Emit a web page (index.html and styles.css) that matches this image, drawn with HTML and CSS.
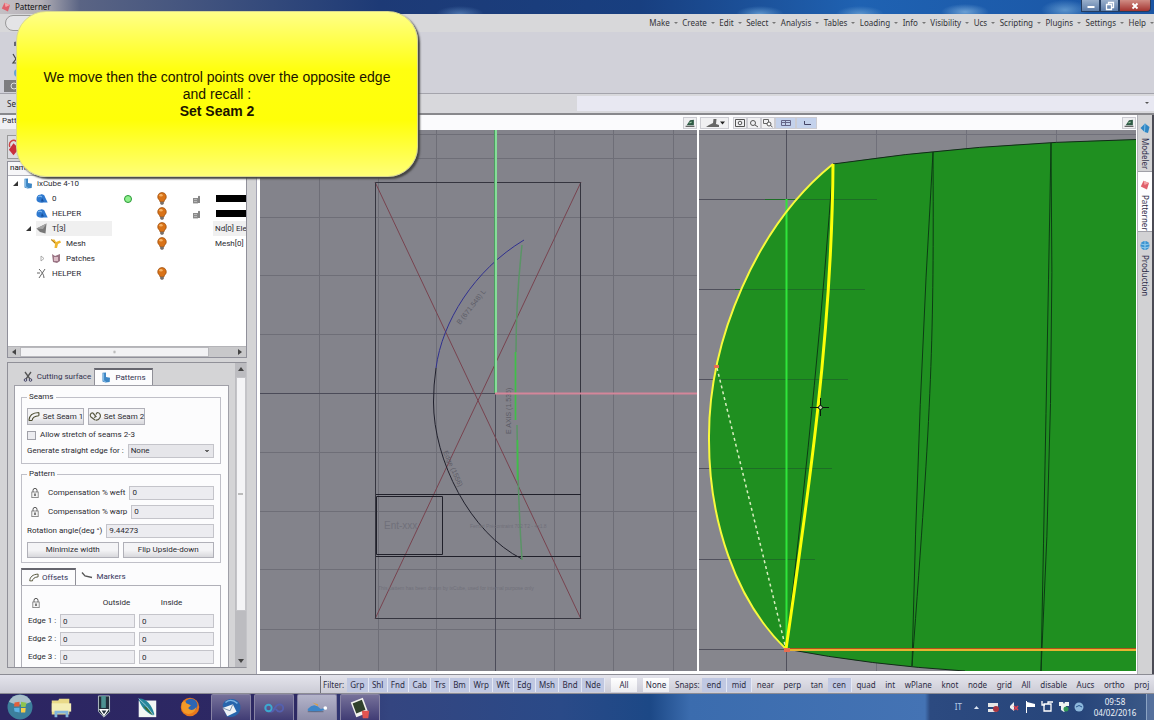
FILE: index.html
```html
<!DOCTYPE html>
<html lang="en">
<head>
<meta charset="utf-8">
<title>Patterner</title>
<link rel="stylesheet" href="styles.css">
</head>
<body>
<svg class="defs" aria-hidden="true">
  <symbol id="bulb" viewBox="0 0 10 13"><path d="M5 .5a4.3 4.3 0 0 0-2.6 7.7L3.2 10h3.6l.8-1.8A4.3 4.3 0 0 0 5 .5z" fill="#d97318" stroke="#9a4a0c" stroke-width=".7"/><ellipse cx="4" cy="3.2" rx="1.7" ry="1.3" fill="#f6b266"/><path d="M3.2 9.8h3.6v2l-1 .9H4.2l-1-.9z" fill="#77706c"/></symbol>
  <symbol id="lock" viewBox="0 0 10 12"><path d="M3 5V3.4a2 2 0 0 1 4 0V5" fill="none" stroke="#555" stroke-width="1"/><rect x="1.8" y="5" width="6.4" height="5.6" fill="#f4f4f4" stroke="#777" stroke-width=".8"/><path d="M5 6.5v2.6" stroke="#333" stroke-width="1.2"/></symbol>
  <symbol id="unlock" viewBox="0 0 9 10"><path d="M1 4h5v5.4H1z" fill="#8a8a8a"/><path d="M2 5.5h3M2 7.5h3" stroke="#ccc" stroke-width=".7"/><path d="M6.2 9V2.2a1 1 0 0 1 1.6 0V9z" fill="#666"/></symbol>
  <symbol id="layer" viewBox="0 0 12 10"><path d="M.5 6.500C.3 3 2 1 4.300 1.300 6 .2 8.600 1.300 9 3.500L11.700 9H7.500C4 9.500 1.200 9 .5 6.500z" fill="#2f79cf"/><path d="M2 3.600c1-1.300 3-1.200 4 0" stroke="#8ec4f4" fill="none"/><path d="M5 8 6 4.500l2 3.500z" fill="#174f9c"/></symbol>
  <symbol id="pattern" viewBox="0 0 10 11"><path d="M1.500.8 5 .5v4.600l4 .6-.3 4.300-4.200.6-3-1z" fill="#3d86c4"/><path d="M2.600 1.300v7.500l2 .8" stroke="#8cc2ec" fill="none"/></symbol>
  <symbol id="gem" viewBox="0 0 10 11"><path d="M3.500.8 9 3 7 9.500.8 6.500z" fill="#e0606c"/><path d="M3.500.8 9 3 4.600 5z" fill="#f4a4a8"/></symbol>
  <symbol id="pin" viewBox="0 0 10 9"><path d="M1 7.500h8" stroke="#555"/><path d="m2 6.500 3-4.500 3.500-.5v5z" fill="#2f5a45"/><path d="m4.500 4.500 2-1" stroke="#9ac6a4"/></symbol>
  <symbol id="offset" viewBox="0 0 11 9"><path d="M.8 8.200C1 4 4 1 10 .8M3.800 8.200C4 6 6 4 10 3.800M.8 8.200h3M10 .8v3" fill="none" stroke="#4c4c30" stroke-width="1"/></symbol>
</svg>

<header class="titlebar">
  <span class="app-name"><svg class="ic10"><use href="#gem"/></svg>Patterner</span>
  <div class="window-buttons">
    <button class="win" aria-label="Minimize"><svg viewBox="0 0 12 10"><path d="M2.500 6h7" stroke="#fff" stroke-width="2"/></svg></button>
    <button class="win" aria-label="Restore"><svg viewBox="0 0 12 10"><path d="M4.500 3V1.500h5v5H8M2.500 3.500h5v5h-5z" fill="none" stroke="#fff" stroke-width="1.300"/></svg></button>
    <button class="win close" aria-label="Close"><svg viewBox="0 0 12 10"><path d="m3.500 2.500 5 5m0-5-5 5" stroke="#fff" stroke-width="1.800"/></svg></button>
  </div>
</header>

<nav class="menubar">
  <span class="quick"></span>
  <div class="menus">
    <button>Make</button><button>Create</button><button>Edit</button><button>Select</button><button>Analysis</button><button>Tables</button><button>Loading</button><button>Info</button><button>Visibility</button><button>Ucs</button><button>Scripting</button><button>Plugins</button><button>Settings</button><button>Help</button>
  </div>
</nav>

<section class="ribbon">
  <svg class="ribbon-tools" viewBox="0 0 60 60"><path d="m10 10 4-1v5h-4z" fill="#667"/><path d="m9 22 3 5-3 4h6" fill="none" stroke="#444" stroke-width="1.200"/><circle cx="14" cy="41" r="4" fill="#6aa2d4"/><path d="M0 48h60v12H0z" fill="#7d7d80"/><circle cx="10" cy="54" r="3" fill="none" stroke="#ddd"/></svg>
</section>

<section class="command">
  <label class="command-label" for="cmd">Select</label>
  <input class="command-input" id="cmd"><span class="caret"></span>
</section>

<main class="workspace">
  <aside class="side">
    <div class="side-title">Patterner</div>
    <div class="side-body">
      <div class="side-tools"><svg viewBox="0 0 24 24"><path d="M2 12C0 6 6 3 9 6" fill="none" stroke="#c44" stroke-width="1.500"/><path d="m6 8 6 6-6 7-5-6z" fill="#c8303c"/></svg></div>
      <section class="tree">
        <div class="tree-head">name</div>
        <ul class="tree-rows">
          <li><span class="name l0"><i class="tw expanded"></i><svg class="ic10"><use href="#pattern"/></svg>ixCube 4-10</span></li>
          <li><span class="name l1"><svg class="ic12"><use href="#layer"/></svg>0</span><span class="dot"></span><svg class="bulb"><use href="#bulb"/></svg><svg class="lk"><use href="#unlock"/></svg><span class="swatch"></span></li>
          <li><span class="name l1"><svg class="ic12"><use href="#layer"/></svg>HELPER</span><svg class="bulb"><use href="#bulb"/></svg><svg class="lk"><use href="#unlock"/></svg><span class="swatch"></span></li>
          <li><span class="name l1 sel"><i class="tw expanded"></i><svg class="ic12" viewBox="0 0 12 11"><path d="M.5 5.500 10.500.5 9.500 10.500 4 9z" fill="#777"/><path d="M.5 5.500 10.500.5 7 6z" fill="#a5a5a5"/></svg>T[3]</span><svg class="bulb"><use href="#bulb"/></svg><span class="info sel">Nd[0] Ele</span></li>
          <li><span class="name l2"><svg class="ic12" viewBox="0 0 12 11"><path d="M1 1.500h3.500L6 4l4-1.500 1 2L8 6l-1 4H4.500L5 6z" fill="#eeb630"/><path d="m1 1.500 4 3.500" stroke="#a87418"/></svg>Mesh</span><svg class="bulb"><use href="#bulb"/></svg><span class="info">Mesh[0]</span></li>
          <li><span class="name l2"><svg class="tw" viewBox="0 0 5 7"><path d="M1 1v5l3-2.500z" fill="#fff" stroke="#999" stroke-width=".8"/></svg><svg class="ic12" viewBox="0 0 12 11"><path d="m2 1 3 2 5-2v7L7 10 3 9z" fill="#9a7484"/><path d="M4 4h4v4H4z" fill="#dcbcc6"/></svg>Patches</span></li>
          <li><span class="name l1"><svg class="ic12" viewBox="0 0 12 11"><path d="M3 1c3 3 5 6 5 9M9 1 3 10M1 5h3" fill="none" stroke="#666"/></svg>HELPER</span><svg class="bulb"><use href="#bulb"/></svg></li>
        </ul>
        <div class="hscroll"><i class="arr left"></i><div class="hthumb"></div><i class="arr right"></i></div>
      </section>

      <section class="options">
        <div class="options-view">
          <div class="tabs">
            <button class="tab"><svg class="ic10" viewBox="0 0 10 11"><path d="m2 1 5 7M8 1 3 8" stroke="#555" stroke-width="1.300"/><circle cx="2.500" cy="9" r="1.300" fill="none" stroke="#446"/><circle cx="7.500" cy="9" r="1.300" fill="none" stroke="#446"/></svg>Cutting surface</button>
            <button class="tab active"><svg class="ic10"><use href="#pattern"/></svg>Patterns</button>
          </div>
          <div class="pane">
            <fieldset class="seams"><legend>Seams</legend>
              <div class="seam-buttons">
                <button class="btn"><svg class="ic12"><use href="#offset"/></svg>Set Seam 1</button>
                <button class="btn"><svg class="ic12" viewBox="0 0 12 10"><path d="M4 1.500C1.500 1 .5 4 2 5.500l4 3M4 1.500 7 5 5 6M8 1c3 0 4 3 3 5S8 9 6.500 8.500M8 1l-1 2" fill="none" stroke="#5c5c44" stroke-width="1.200"/></svg>Set Seam 2</button>
              </div>
              <label class="check"><input type="checkbox">Allow stretch of seams 2-3</label>
              <div class="field"><label for="straight">Generate straight edge for :</label><select id="straight"><option>None</option></select></div>
            </fieldset>
            <fieldset class="pattern"><legend>Pattern</legend>
              <div class="field"><svg class="padlock"><use href="#lock"/></svg><label for="weft">Compensation % weft</label><input id="weft" value="0"></div>
              <div class="field"><svg class="padlock"><use href="#lock"/></svg><label for="warp">Compensation % warp</label><input id="warp" value="0"></div>
              <div class="field"><label for="rot">Rotation angle(deg °)</label><input id="rot" value="9.44273"></div>
              <div class="pair"><button class="btn">Minimize width</button><button class="btn">Flip Upside-down</button></div>
            </fieldset>
            <div class="subtabs">
              <button class="subtab active"><svg class="ic10"><use href="#offset"/></svg>Offsets</button>
              <button class="subtab"><svg class="ic12" viewBox="0 0 12 10"><path d="m1 1 3 3.500L11 6" fill="none" stroke="#555" stroke-width="1.300"/></svg>Markers</button>
            </div>
            <div class="offsets">
              <svg class="padlock"><use href="#lock"/></svg><span class="col outside">Outside</span><span class="col inside">Inside</span>
              <label for="o1">Edge 1 :</label><input id="o1" value="0"><input aria-label="Edge 1 inside" value="0">
              <label for="o2">Edge 2 :</label><input id="o2" value="0"><input aria-label="Edge 2 inside" value="0">
              <label for="o3">Edge 3 :</label><input id="o3" value="0"><input aria-label="Edge 3 inside" value="0">
            </div>
          </div>
        </div>
        <div class="vscroll"><i class="arr up"></i><div class="vthumb"></div><i class="arr down"></i></div>
      </section>
    </div>
  </aside>

  <section class="views">
    <div class="view">
      <div class="view-bar"><button class="tool end" aria-label="Pin view"><svg class="ic10"><use href="#pin"/></svg></button></div>
      <svg class="scene" viewBox="260 130 437 541" preserveAspectRatio="xMinYMin slice">
        <rect x="0" y="0" width="1600" height="1400" fill="#83838b"/>
        <path d="M319.500 130v541M378.500 130v541M436.500 130v541M554.500 130v541M613.500 130v541M673.500 130v541M260 134.500h437M260 158.500h437M260 217.500h437M260 275.500h437M260 334.500h437M260 452.500h437M260 511.500h437M260 569.500h437M260 629.500h437" stroke="#6e6e77" fill="none"/>
        <path d="M260 393.500h236M495.500 393v278" stroke="#4b4b58"/>
        <path d="m375 182 206 437M581 182 375 619" stroke="#78434f" fill="none"/>
        <g fill="none" stroke="#35353f" stroke-width="1"><path d="M375.500 182.500h205v436h-205z"/><path d="M376 494.500h205M376 556.500h205M376.500 496.500h66v58h-66z" stroke="#20202a"/></g>
        <path d="M433.500 402C433.500 460 470 533 522 559" fill="none" stroke="#20202c"/>
        <path d="M524 240C474 270 442 322 436 368" fill="none" stroke="#30308f"/>
        <path d="M436 368Q433.500 385 433.500 402" fill="none" stroke="#20202c"/>
        <path d="M522 245Q516 300 516 352M517 425Q518 500 522 560" fill="none" stroke="#5a9466" stroke-width="1.500"/>
        <path d="M515.500 352v68M517.500 440v40" stroke="#3fc048" stroke-width="1.700"/>
        <g class="scene-text"><text transform="translate(460 325) rotate(-52)">B (671.548) L</text><text transform="translate(511 434) rotate(-90)">E AXIS (1.536)</text><text transform="translate(443 452) rotate(66)">Edge (1556)</text></g>
        <g class="scene-text faint"><text x="384" y="529" font-size="10">Ent-xxx</text><text x="470" y="528">Ferrari Précontraint 702 T2 - 4x1.8</text><text x="378" y="590">This pattern has been drawn by ixCube, used for internal purpose only</text></g>
        <path d="M495.500 130v263" stroke="#86dd98" stroke-width="3"/><path d="M494.500 130v263" stroke="#4e9b62"/>
        <path d="M495 393.500h202" stroke="#d4869a" stroke-width="2"/>
      </svg>
    </div>
    <div class="view">
      <div class="view-bar">
        <button class="tool cam" aria-label="Camera"><svg viewBox="0 0 22 10"><path d="M2 9h13V7l-3-1 .5-5h-3L9 5 5 7z" fill="#666"/><path d="M16 3.500h5L18.500 6.500z" fill="#222"/></svg></button>
        <button class="tool gap" aria-label="Zoom all"><svg viewBox="0 0 12 10"><path d="M1.500 1.500h9v7h-9z" fill="none" stroke="#555"/><circle cx="6" cy="5" r="1.800" fill="none" stroke="#555"/></svg></button>
        <button class="tool" aria-label="Zoom"><svg viewBox="0 0 12 10"><circle cx="5" cy="5" r="2.500" fill="none" stroke="#555"/><path d="m7 7 3 2" stroke="#555"/></svg></button>
        <button class="tool" aria-label="Zoom window"><svg viewBox="0 0 12 10"><path d="M1.500 1.500h5v4h-5z" fill="none" stroke="#666"/><circle cx="7" cy="6" r="2" fill="#fff" stroke="#555"/><path d="m8.500 7.500 2 1.500" stroke="#555"/></svg></button>
        <button class="tool on" aria-label="Grid"><svg viewBox="0 0 12 10"><path d="M1.500 2.500h9v5h-9zM1.500 4.500h9M5.500 2.500v5" fill="none" stroke="#668"/></svg></button>
        <button class="tool on" aria-label="Axes"><svg viewBox="0 0 12 10"><path d="M3.500 3v3.500H10" fill="none" stroke="#446"/></svg></button>
        <button class="tool end" aria-label="Pin view"><svg class="ic10"><use href="#pin"/></svg></button>
      </div>
      <svg class="scene" viewBox="699 130 437 541" preserveAspectRatio="xMinYMin slice">
        <rect x="600" y="0" width="1600" height="1400" fill="#86868d"/>
        <path d="M876.500 130v541M966.500 130v541M1056.500 130v541M699 134.500h437" stroke="#70707a"/>
        <path d="M786.500 130v541M699 199.500h90M699 289.500h60M699 379.500h20M699 468.500h20M699 559.500h40M699 649.500h90" stroke="#50505c"/>
        <path d="M833 164Q975 143 1136 139.500V671H965Q870 665 786 649C735 600 709 520 709 440C708 340 757 225 833 164z" fill="#1f8f20"/>
        <path d="M765 199.500h112M735 289.500h130M718 379.500h130M712 468.500h120M730 559.500h85" stroke="#1d6e26"/>
        <g fill="none" stroke="#0c3c14"><path d="M833 164Q975 143 1136 139.500M786 649Q870 665 965 671" stroke="#13291a"/>
        <path d="M833 164Q819 365 786 649M933 152C934 340 932 400 912 666M933 152Q918 400 912 666M1051 143Q1055 400 1041 671M1051 143Q1046 420 1041 671"/></g>
        <path d="M786.500 199v450" stroke="#2fe53b" stroke-width="2"/>
        <path d="M786 649.500h350" stroke="#b0521c" stroke-width="3"/><path d="M786 650h350" stroke="#e8b330" stroke-width="2"/>
        <path d="m717 368 69 281" stroke="#d8efc0" stroke-width="1.500" stroke-dasharray="3 3"/>
        <path d="M786 649C735 600 709 520 709 440C708 340 757 225 833 164" fill="none" stroke="#f8fa3c" stroke-width="2"/>
        <path d="M833 164C832 330 809 490 786 649" fill="none" stroke="#fbff08" stroke-width="3"/>
        <path d="M714 365h5v3h-5zM784 648h6v4h-6z" fill="#e86c50"/>
        <path d="M810 407.500h19M820.500 398v18" stroke="#081c0c"/><circle cx="820.500" cy="407.500" r="2" fill="#bcd0a8" stroke="#081c0c"/>
      </svg>
    </div>
  </section>

  <nav class="modes">
    <button class="mode"><svg class="ic10" viewBox="0 0 10 11"><path d="M5 .5 9.500 4 8 10 4.500 9 .5 5z" fill="#2f86c4"/><path d="m5 .5-.5 8.500" stroke="#7cc0ea"/></svg>Modeler</button>
    <button class="mode active"><svg class="ic10"><use href="#gem"/></svg>Patterner</button>
    <button class="mode"><svg class="ic10" viewBox="0 0 10 11"><circle cx="5" cy="5.500" r="4.500" fill="#3b93d0"/><path d="M1 4q4 2 8 0M1 7q4 2 8 0M5 1v9" stroke="#a4d8f4" fill="none" stroke-width=".8"/></svg>Production</button>
  </nav>
</main>

<footer class="status">
  <div class="filters"><span class="cap">Filter:</span>
    <div class="toggles lit"><button>Grp</button><button>Shl</button><button>Fnd</button><button>Cab</button><button>Trs</button><button>Bm</button><button>Wrp</button><button>Wft</button><button>Edg</button><button>Msh</button><button>Bnd</button><button>Nde</button></div>
    <button class="plain">All</button><button class="plain">None</button>
  </div>
  <span class="cap">Snaps:</span>
  <div class="snaps"><button class="on">end</button><button class="on">mid</button><button>near</button><button>perp</button><button>tan</button><button class="on">cen</button><button>quad</button><button>int</button><button>wPlane</button><button>knot</button><button>node</button><button>grid</button><button>All</button><button>disable</button><button>Aucs</button><button>ortho</button><button>proj</button></div>
</footer>

<footer class="taskbar">
  <button class="task" aria-label="Start"><svg viewBox="0 0 26 26"><circle cx="13" cy="13" r="12.500" fill="#3c7f9c"/><path d="M2 8a12 12 0 0 1 22 0Q13 13 2 8z" fill="#a9bfca"/><path d="m7.500 8.500 5-.8v4.800H7z" fill="#e2603c"/><path d="m14 7.800 5.500 1-1 4.200H14z" fill="#8ec450"/><path d="m7 14 5.500-.2v4.800l-5-1z" fill="#5cb2e4"/><path d="M14 14h4.700l-.5 4.500-4.200 0z" fill="#f6cc48"/></svg></button>
  <button class="task" aria-label="Explorer"><svg viewBox="0 0 26 26"><path d="M3 6h7l1-2h11v17H3z" fill="#e9d988"/><path d="M3 9h21v9H3z" fill="#f4edb4"/><path d="M6 24v-7h15v7h-3v-4H9v4z" fill="#80b4dc"/></svg></button>
  <button class="task" aria-label="Pen tool"><svg viewBox="0 0 26 26"><path d="M7 1h12v17l-6 6-6-6z" fill="#24303c" stroke="#b8c4ca"/><path d="M10 1h5v13h-5z" fill="#4e9292"/><path d="m9 16 4 6 4-6z" fill="none" stroke="#fff" stroke-width="1.500"/></svg></button>
  <button class="task" aria-label="Editor"><svg viewBox="0 0 26 26"><path d="M4 6h19v18H4z" fill="#f2f6f4"/><path d="M4 4c7-1 14 6 17 17l-2 1C11 18 6 12 4 4z" fill="#26869c"/><path d="M9 12q7 3 11 10-6-3-11-10z" fill="#3c6a28"/><path d="M4 4q9 7 16 18" stroke="#9cc8d8" fill="none"/></svg></button>
  <button class="task" aria-label="Firefox"><svg viewBox="0 0 26 26"><circle cx="13" cy="13" r="10" fill="#e8771c"/><circle cx="14" cy="11" r="7" fill="#2c66b4"/><path d="M4 9c2-3 4-3 5 0l5 2-3 3c2 3 6 3 9-1-1 8-13 11-16 2z" fill="#f49a28"/></svg></button>
  <button class="task open" aria-label="Mail"><svg viewBox="0 0 26 26"><path d="M4 10C5 2 20 0 23 10c2 9-7 15-15 12z" fill="#2765ac"/><path d="M7 7q6-5 13 1" stroke="#7cb4e4" fill="none" stroke-width="1.500"/><path d="M4 13 15 9l4 8-10 5z" fill="#eef2f6"/><path d="m4 13 8 3 3-7" fill="none" stroke="#7890ac"/></svg></button>
  <button class="task open" aria-label="Links"><svg viewBox="0 0 26 26"><path d="M9 9a4 3.500 0 1 0 0 8q3 0 5-4t5-4a3.500 3.500 0 1 1 0 8q-2 0-4-3" fill="none" stroke="#5460b0" stroke-width="2"/><circle cx="7" cy="13" r="3.500" fill="none" stroke="#3caad0" stroke-width="2"/></svg></button>
  <button class="task open current" aria-label="ixCube"><svg viewBox="0 0 26 26"><path d="M3 14q7-8 14 0l5-1v2q-9 4-19 1z" fill="#3e86c8"/><path d="m8 7 6 2v2z" fill="#d8a048"/><path d="M3 17h17" stroke="#606478"/><circle cx="22" cy="13" r="2" fill="#fff"/></svg></button>
  <button class="task open" aria-label="Pictures"><svg viewBox="0 0 26 26"><path d="m3 7 13-5 6 16-13 5z" fill="#f2f2ee"/><path d="m5 8 10-4 4 11-10 4z" fill="#30412c"/><path d="M15 16h8l-1 8h-6z" fill="#e25450"/></svg></button>
  <div class="tray">
    <span class="lang">IT</span>
    <svg class="tray-icons" viewBox="0 0 110 16"><path d="m0 10 2.500-3L5 10z" fill="#dde6f4"/><path d="M14 4h10v4H14zM14 10h9v3h-9z" fill="#e6e6e6"/><circle cx="22" cy="10" r="3" fill="#a83440"/><path d="m36 7 4-4v9l-4-3z" fill="#eee"/><path d="m40 7 4 4m0-4-4 4" stroke="#e0404c" stroke-width="1.600"/><path d="M52.500 2v12" stroke="#fff"/><path d="m53 3 8 2v3l-8 0z" fill="#fff"/><path d="M70 5h7v7h-7zM68 2v4h3M74 5V3h5" fill="none" stroke="#fff" stroke-width="1.300"/><path d="M85 3h4l1 2 1-2h4v4h-3v4l-2 2-3-2V7h-2z" fill="#eef4f0"/><circle cx="92" cy="10" r="2.500" fill="#2f9656"/><circle cx="105" cy="8" r="4.500" fill="#8cb8dc"/><path d="M102 8q3-3 6 0" stroke="#27558c" fill="none"/></svg>
    <div class="clock"><span>09:58</span><span>04/02/2016</span></div>
    <button class="desktop" aria-label="Show desktop"></button>
  </div>
</footer>

<div class="callout"><p>We move then the control points over the opposite edge<br>and recall :<br><strong>Set Seam 2</strong></p></div>
</body>
</html>
```
FILE: styles.css
```css
* { box-sizing: border-box; }
html, body { height: 100%; }
body {
  margin: 0;
  display: flex;
  flex-direction: column;
  overflow: hidden;
  position: relative;
  background: #d6d6d8;
  color: #2a2a30;
  font: 8px/12px "Noto Sans", "Open Sans", sans-serif;
}
button, input, select { font: inherit; color: inherit; margin: 0; padding: 0; border: 0; background: none; border-radius: 0; min-width: 0; }
button { white-space: nowrap; }
svg { flex: none; }
.defs { display: none; }
.ic10 { width: 10px; height: 11px; }
.ic12 { width: 12px; height: 11px; }

.titlebar {
  flex: none; height: 14px; display: flex; justify-content: space-between;
  background:
    radial-gradient(ellipse 24px 8px at 460px 14px, #4c74ac, transparent),
    radial-gradient(ellipse 24px 8px at 760px 14px, #5c94cc, transparent),
    radial-gradient(ellipse 24px 8px at 860px 14px, #5c94cc, transparent),
    radial-gradient(ellipse 24px 8px at 965px 12px, #6ca0d4, transparent),
    radial-gradient(ellipse 24px 10px at 1065px 10px, #5c94cc, transparent),
    linear-gradient(90deg, #c4c0c4 0, #b4b0b6 40px, #5a6484 80px, #1d3a76 380px, #183f80 640px, #1f62b2 860px, #1a55a4 1154px);
}
.app-name { display: flex; align-items: center; gap: 4px; padding-left: 1px; color: #111; }
.window-buttons { display: flex; height: 12px; margin-right: 3px; }
.win { width: 19px; display: flex; justify-content: center; align-items: center; border: 1px solid #233c60; border-top: 0; background: linear-gradient(#9ab0cc, #5c7ca8); }
.win svg { width: 12px; height: 10px; }
.close { width: 32px; border-radius: 0 0 4px 0; background: linear-gradient(#d08c84, #a43430); }

.menubar { flex: none; height: 18px; display: flex; justify-content: flex-end; align-items: center; background: #d8d8da; }
.quick { width: 60px; height: 16px; margin-right: auto; margin-left: 5px; border: 1px solid #999; border-radius: 8px; background: #e4e4e6; }
.menus { width: 44%; padding-left: 3px; display: flex; justify-content: space-between; color: #333338; }
.menus button { display: flex; align-items: center; gap: 4px; }
.menus button::after { content: ""; border: 2px solid transparent; border-top-color: #777; border-bottom: 0; }

.ribbon { flex: none; height: 62px; background: #d1d1d9; border-bottom: 1px solid #a4a4ac; padding-left: 4px; }
.ribbon-tools { width: 60px; height: 60px; display: block; }
.command { flex: none; height: 21px; display: flex; align-items: center; background: #d8d8dc; border-bottom: 2px solid #88888c; position: relative; }
.command-label { flex: 1; padding-left: 7px; }
.command-input { width: 50%; height: 15px; padding: 0 4px; background: #e8e8f2; }
.caret { position: absolute; right: 5px; top: 8px; border: 2px solid transparent; border-top-color: #555; border-bottom: 0; }

.workspace { flex: 1; min-height: 0; display: flex; }
.side { flex: none; width: 257px; display: flex; flex-direction: column; background: #d4d4d6; border-right: 1px solid #a4a4b4; font-family: Roboto, sans-serif; }
.side-title { height: 14px; padding-left: 2px; background: #f0f0f4; }
.side-body { flex: 1; min-height: 0; display: flex; flex-direction: column; padding: 6px 9px 6px 7px; }
.side-tools { height: 24px; margin-bottom: 2px; }
.side-tools svg { width: 24px; height: 24px; border: 1px solid #999; background: #dcdce0; }
.tree { flex: none; height: 197px; display: flex; flex-direction: column; background: #fff; border: 1px solid #90909a; margin-bottom: 4px; }
.tree-head { height: 14px; padding-left: 2px; background: #f6f6f8; border-bottom: 1px solid #b4b4bc; color: #111; }
.tree-rows { flex: 1; list-style: none; margin: 0; padding: 0; overflow: hidden; }
.tree-rows li { height: 15px; display: grid; grid-template-columns: 104px 32px 36px 33px 1fr; align-items: center; }
.name { grid-column: 1; grid-row: 1; display: flex; align-items: center; gap: 4px; height: 15px; position: relative; white-space: nowrap; }
.l0 { padding-left: 15px; }
.l1 { padding-left: 28px; }
.l2 { padding-left: 42px; }
.name.sel { background: linear-gradient(#f0f0f0, #f0f0f0) right / 76px 100% no-repeat; }
.tw { position: absolute; margin-left: -10px; width: 5px; height: 7px; }
.tw.expanded { width: 0; height: 0; border-left: 5px solid transparent; border-bottom: 5px solid #333; }
.dot { grid-column: 2; grid-row: 1; justify-self: center; width: 8px; height: 8px; border-radius: 50%; border: 1px solid #2a9838; background: #8ef08c; }
.bulb { grid-column: 3; grid-row: 1; justify-self: center; width: 10px; height: 13px; }
.lk { grid-column: 4; grid-row: 1; justify-self: center; width: 9px; height: 10px; }
.swatch { grid-column: 5; grid-row: 1; height: 7px; margin-left: 3px; background: #000; }
.info { grid-column: 5; grid-row: 1; height: 15px; line-height: 15px; padding-left: 2px; white-space: nowrap; }
.info.sel { background: #f0f0f0; }
.hscroll { height: 11px; display: flex; align-items: center; background: #c8c8ca; border-top: 1px solid #b4b4b8; }
.hthumb { flex: 1; height: 10px; margin: 0 29px 0 4px; border: 1px solid #b8b8bc; background: radial-gradient(circle 2px, #aaa, transparent) #f2f2f4; }
.arr { width: 0; height: 0; flex: none; border: 3px solid transparent; }
.left { border-right: 4px solid #444; border-left: 0; margin-left: 4px; }
.right { border-left: 4px solid #444; border-right: 0; margin-right: 4px; }
.up { border-bottom: 4px solid #444; border-top: 0; }
.down { border-top: 4px solid #444; border-bottom: 0; }

.options { flex: 1; min-height: 0; display: flex; border: 1px solid #909098; border-right-color: #c4c4c8; overflow: hidden; }
.options-view { flex: 1; padding: 5px 6px 0; overflow: hidden; }
.tabs { display: flex; padding-left: 6px; }
.tab { height: 17px; width: 74px; display: flex; align-items: center; justify-content: center; gap: 4px; color: #333350; }
.tab.active, .subtab.active { background: #fcfcfd; border: 1px solid #909098; border-bottom: 0; border-top: 2px solid #66666e; }
.tab.active { width: 59px; }
.pane { background: #fcfcfd; border: 1px solid #a0a0a8; height: 300px; padding: 5px 7px 0 6px; }
fieldset { margin: 0; min-width: 0; border: 1px solid #c0c0c8; padding: 0 6px 0 5px; display: flow-root; }
legend { padding: 0 2px; margin-left: 0; line-height: 12px; }
.seams { height: 73px; margin-bottom: 4px; }
.pattern { height: 95px; margin-bottom: 5px; }
.seam-buttons { display: flex; gap: 4px; margin-top: 5px; }
.btn { height: 17px; border: 1px solid #b0b0b8; background: linear-gradient(#f4f4f6 50%, #d8d8dc); display: flex; align-items: center; justify-content: center; gap: 3px; }
.seam-buttons .btn { width: 57px; }
.check { display: flex; align-items: center; gap: 4px; height: 16px; margin-top: 2px; }
.check input { appearance: none; width: 9px; height: 9px; border: 1px solid #a0a0a8; background: #ececf0; }
.field { display: flex; align-items: center; gap: 4px; height: 15px; white-space: nowrap; }
.pattern .field { margin-bottom: 4px; }
.pattern .field:first-of-type { margin-top: 5px; }
.field input, .field select, .offsets input { flex: 1; height: 14px; padding: 0 2px; border: 1px solid #c4c4ca; background: #ececf0; }
.field select { appearance: none; background: conic-gradient(from -45deg at 50% 100%, #666 90deg, transparent 0) right 4px center / 4px 2px no-repeat, #e6e6ea; }
.padlock { width: 10px; height: 12px; margin: 0 4px 0 3px; }
.pair { display: grid; grid-template-columns: 1fr 1fr; gap: 4px; }
.pair .btn { height: 16px; }
.subtabs { display: flex; }
.subtab { height: 17px; width: 55px; display: flex; align-items: center; justify-content: center; gap: 3px; color: #333358; }
.offsets { border: 1px solid #b0b0b8; height: 120px; display: grid; grid-template-columns: 28px 1fr 1fr; grid-auto-rows: 14px; align-items: center; gap: 4px; padding: 10px 6px 0; }
.offsets label { white-space: nowrap; }
.offsets input { width: 100%; }
.col { text-align: center; }
.outside { padding-left: 38px; }
.inside { padding-right: 10px; }
.vscroll { width: 11px; display: flex; flex-direction: column; align-items: center; background: #bcbcc0; padding: 4px 0; }
.vthumb { flex: 1; width: 10px; margin: 6px 0 48px; background: linear-gradient(#bbb, #bbb) center / 5px 2px no-repeat, #f4f4f6; border: 1px solid #c4c4c8; }

.views { flex: 1; min-width: 0; display: grid; grid-template-columns: 1fr 1fr; gap: 2px; padding: 0 1px 3px 3px; background: #fff; }
.view { min-width: 0; min-height: 0; display: flex; flex-direction: column; }
.view-bar { flex: none; height: 15px; display: flex; align-items: center; background: #fbfbfd; }
.tool { width: 14px; height: 12px; display: flex; justify-content: center; align-items: center; border: 1px solid #ccccd2; background: #f0f0f2; }
.tool svg { width: 12px; height: 10px; }
.tool.cam { width: 29px; margin-left: 1px; }
.tool.cam svg { width: 22px; }
.tool.gap { margin-left: 4px; }
.tool.on { width: 21px; background: #c4d2ec; }
.tool.end { margin-left: auto; }
.scene { flex: 1; min-height: 0; width: 100%; display: block; }
.scene-text { font: 7px "Liberation Sans", sans-serif; fill: #5c5c66; }
.faint { font-size: 5px; fill: #70707a; }

.modes { flex: none; width: 17px; display: flex; flex-direction: column; background: #d2d2d4; border-right: 2px solid #4a4a54; border-left: 1px solid #b0b0b8; }
.mode { writing-mode: vertical-rl; display: flex; align-items: center; gap: 4px; padding: 8px 0; height: 60px; border-bottom: 1px solid #a0a0a8; color: #2c2c48; }
.mode:first-child { height: 57px; }
.mode.active { background: #fdfdfe; }
.mode:last-child { border-bottom: 0; }

.status { flex: none; height: 20px; display: flex; align-items: center; padding: 1px 0 0 320px; border-top: 1px solid #8c8c94; border-bottom: 1px solid #8c8c94; background: linear-gradient(#e4e4ec, #ccccd6); color: #2c2c44; white-space: nowrap; }
.filters { width: 355px; height: 17px; display: flex; align-items: center; border-left: 1px solid #70707a; padding-left: 2px; }
.cap { flex: none; width: 24px; }
.toggles { display: flex; flex: 1; margin-right: 6px; }
.toggles button, .snaps button { flex: 1 1 auto; height: 14px; }
.lit button, .snaps .on { background: #c0c8e2; border-right: 1px solid #e4e8f4; }
.plain { width: 26px; height: 14px; margin-right: 6px; background: linear-gradient(#fff, #ececf0); }
.snaps { flex: 1; min-width: 0; display: flex; margin-left: 3px; }

.taskbar { flex: none; height: 26px; display: flex; background: linear-gradient(90deg, #2c2562 0, #2d2964 300px, #344580 390px, #2a4a88 560px, #1c4886 650px, #3b6cae 690px, #4473b4 925px, #2c4a80 930px, #27457a 1080px, #3c5a88 1154px); }
.task { width: 43px; height: 26px; display: flex; align-items: center; justify-content: center; }
.task svg { width: 26px; height: 26px; }
.task:not(:first-child) svg { width: 24px; height: 24px; }
.task:first-child { width: 39px; }
.task.open { border: 1px solid #8884a4; border-bottom: 0; border-radius: 2px 2px 0 0; background: linear-gradient(#76719a, #403c74); width: 40px; margin-right: 3px; }
.task.current { background: linear-gradient(#b4b4ca, #8c8ca8); }
.tray { margin-left: auto; display: flex; align-items: center; color: #f0f4fa; }
.lang { margin-right: 12px; color: #b8cce8; }
.tray-icons { width: 110px; height: 16px; }
.clock { width: 54px; margin: 0 4px 0 4px; display: flex; flex-direction: column; align-items: center; line-height: 11px; }
.desktop { width: 8px; height: 26px; border-left: 1px solid #8ca4c4; background: #55709c; }

.callout {
  position: absolute; left: 16px; top: 11px; width: 402px; height: 166px;
  display: flex; align-items: center; justify-content: center; text-align: center;
  border-radius: 30px; border: 1px solid #d8d890;
  background: linear-gradient(#ffff88 0, #ffff10 35%, #ffff08 66%, #ffff78 100%);
  box-shadow: 2px 2px 2px #444;
  font: 14px/17px "Liberation Sans", Arial, sans-serif; color: #1c1400;
}
.callout p { margin: 0; }
```
